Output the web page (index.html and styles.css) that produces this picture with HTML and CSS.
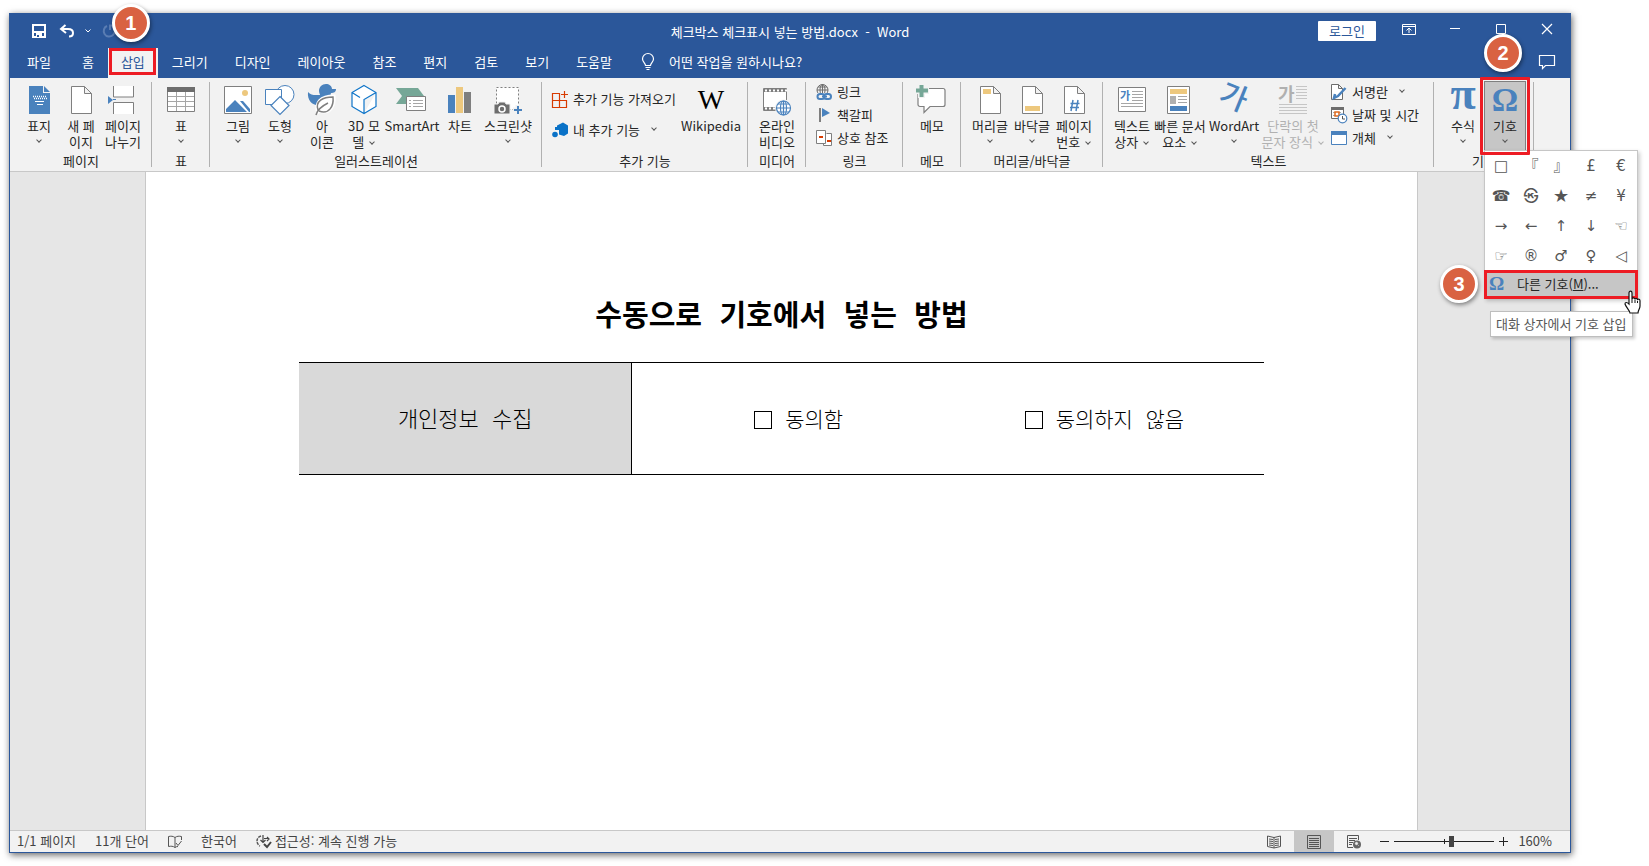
FILE: index.html
```html
<!DOCTYPE html>
<html lang="ko">
<head>
<meta charset="utf-8">
<title>체크박스 체크표시 넣는 방법.docx - Word</title>
<link rel="stylesheet" href="styles.css">
</head>
<body>
<div class="window">
  <header class="titlebar">
    <div class="quick">
      <button class="qbtn" aria-label="저장"><svg width="14" height="14" viewBox="0 0 14 14"><path d="M1 1h12v12H1z" fill="none" stroke="#fff" stroke-width="2"/><path d="M2 7h10v2H2zM4 9h6v5H4z" fill="#fff"/><path d="M5 11h2v2H5z" fill="#2b579a"/></svg></button>
      <button class="qbtn" aria-label="실행 취소"><svg width="16" height="14" viewBox="0 0 16 14"><path d="M6.500 1L2 5l5 4M2.500 5H9c3 0 5 1.500 5 4 0 2-1.500 3.500-4 3.500" fill="none" stroke="#fff" stroke-width="2"/></svg></button>
      <button class="qdrop" aria-label="실행 취소 목록"><svg width="6" height="4" viewBox="0 0 6 4"><path d="M.5.5L3 3 5.500.5" fill="none" stroke="#fff"/></svg></button>
      <button class="qbtn" aria-label="다시 실행"><svg width="14" height="14" viewBox="0 0 14 14"><path d="M5 2a5.500 5.500 0 1 0 6 1M8 6V1.500h5" fill="none" stroke="#5a7db3" stroke-width="2"/></svg></button>
    </div>
    <h1 class="doc-name">체크박스 체크표시 넣는 방법.docx&nbsp; -&nbsp; Word</h1>
    <div class="controls">
      <button class="login">로그인</button>
      <button class="wbtn" aria-label="리본 표시 옵션"><svg width="14" height="12" viewBox="0 0 14 12"><path d="M.5 1.500h13v10H.5zM.5 3.500h13M7 10V5M4.500 7.500L7 5l2.500 2.500" fill="none" stroke="#fff"/></svg></button>
      <button class="wbtn" aria-label="최소화"><svg width="12" height="12" viewBox="0 0 12 12"><path d="M1 5.500h10" stroke="#fff"/></svg></button>
      <button class="wbtn" aria-label="최대화"><svg width="12" height="12" viewBox="0 0 12 12"><path d="M1.500 1.500h9v9h-9z" fill="none" stroke="#fff"/></svg></button>
      <button class="wbtn" aria-label="닫기"><svg width="12" height="12" viewBox="0 0 12 12"><path d="M1 1l10 10M11 1L1 11" stroke="#fff" stroke-width="1.200"/></svg></button>
    </div>
  </header>

  <nav class="tabs">
    <button class="tab file">파일</button>
    <button class="tab">홈</button>
    <button class="tab active">삽입<span class="frame"></span><span class="badge">1</span></button>
    <button class="tab">그리기</button>
    <button class="tab">디자인</button>
    <button class="tab">레이아웃</button>
    <button class="tab">참조</button>
    <button class="tab">편지</button>
    <button class="tab">검토</button>
    <button class="tab">보기</button>
    <button class="tab">도움말</button>
    <button class="tab tell"><svg width="14" height="18" viewBox="0 0 14 18"><path d="M4.500 12.500C4.500 10 1.500 9 1.500 6a5.500 5.500 0 0 1 11 0c0 3-3 4-3 6.500zM4.500 14.500h5M5.500 16.500h3" fill="none" stroke="#fff" stroke-width="1.200"/></svg>어떤 작업을 원하시나요?</button>
    <button class="tab comment" aria-label="메모"><svg width="18" height="16" viewBox="0 0 18 16"><path d="M1.500 1.500h15v10H7.500L4.500 14.500v-3h-3z" fill="none" stroke="#fff" stroke-width="1.200"/></svg></button>
  </nav>

  <div class="ribbon">
    <section class="group">
      <div class="tools">
        <button class="big"><svg class="ico" viewBox="0 0 32 32"><path d="M6 2h14v7h7v21H6z" fill="#4a82bd"/><path d="M21 2l6 6h-6z" fill="#4a82bd"/><path d="M10 12.500h13M11 14.500h13" stroke="#fff" stroke-width="1.500" stroke-dasharray="1 1"/><path d="M12 17.500h9M14 20.500h6" stroke="#fff" stroke-width="1"/></svg><span>표지</span><i class="chev"></i></button>
        <button class="big"><svg class="ico" viewBox="0 0 32 32"><path d="M6.500 2.500h13l7 7v20h-20zM19.500 2.500v7h7" fill="#fff" stroke="#7f7f7f"/></svg><span>새 페<br>이지</span></button>
        <button class="big"><svg class="ico" viewBox="0 0 32 32"><path d="M6 2h20v11H6zM6 19h20v11H6z" fill="#fff"/><path d="M6.500 2v11h20V2M6.500 30V18.500h20V30" fill="none" stroke="#7f7f7f"/><path d="M1 12l5 4-5 4z" fill="#4a82bd"/><path d="M6 15.500h3" stroke="#4a82bd"/></svg><span>페이지<br>나누기</span></button>
      </div>
      <h2>페이지</h2>
    </section>
    <section class="group">
      <div class="tools">
        <button class="big"><svg class="ico" viewBox="0 0 32 32"><path d="M2.500 3.500h27v24h-27z" fill="#fff" stroke="#7f7f7f"/><path d="M2 3h28v5H2z" fill="#6d6d6d"/><path d="M3 12.500h26M3 17.500h26M3 22.500h26M11.500 8v19M20.500 8v19" stroke="#a6a6a6"/></svg><span>표</span><i class="chev"></i></button>
      </div>
      <h2>표</h2>
    </section>
    <section class="group snug">
      <div class="tools">
        <button class="big"><svg class="ico" viewBox="0 0 32 32"><path d="M2.500 2.500h27v27h-27z" fill="#fff" stroke="#7f7f7f"/><circle cx="23" cy="9" r="3" fill="#edc87e"/><path d="M4 28v-3l9-9 12 12zM18 17h3l7 8v3h-1z" fill="#4a82bd"/></svg><span>그림</span><i class="chev"></i></button>
        <button class="big"><svg class="ico" viewBox="0 0 32 32"><g fill="#fff" stroke="#4a82bd"><circle cx="21" cy="10.500" r="9"/><path d="M1.500 5.500h16v15h-16z"/></g><path d="M16 12.500l9 9-9 9-9-9z" fill="#fff" stroke="#4a82bd" stroke-width="1.200"/></svg><span>도형</span><i class="chev"></i></button>
        <button class="big"><svg class="ico" viewBox="0 0 32 32"><path d="M2 8c3 4 8 3 12 3 0-1-1-2-1-4 0-4 3-7 7-7 3 0 6 2 6 5h4c0 3-2 4-5 4l-1 4c0 5-4 8-10 8C7 22 1 17 2 8z" fill="#4a82bd"/><path d="M12 30c-4-12 3-18 16-18 1 10-4 19-15 15" fill="#fff" stroke="#fff" stroke-width="3"/><path d="M10 31c1-5 6-9 12-12M12 26c-3-9 5-13 15-13 1 9-4 18-14 14" fill="none" stroke="#7f7f7f" stroke-width="1.500"/></svg><span>아<br>이콘</span></button>
        <button class="big"><svg class="ico" viewBox="0 0 32 32"><path d="M16 1.500l12 7v14l-12 7-12-7v-14zM4 8.500l8 5M28 8.500l-12 7v14" fill="#fff" stroke="#0f75c9" stroke-width="1.200"/></svg><span>3D 모<br>델 <i class="chev"></i></span></button>
        <button class="big wide"><svg class="ico" viewBox="0 0 32 32"><path d="M0 4h22l6 8H11v8H0l6-8z" fill="#76a797"/><path d="M10.500 12.500h19v14h-19z" fill="#fff" stroke="#7f7f7f"/><path d="M13 16.500h2m2 0h10M13 19.500h2m2 0h10M13 22.500h2m2 0h10" stroke="#a6a6a6"/></svg><span>SmartArt</span></button>
        <button class="big"><svg class="ico" viewBox="0 0 32 32"><path d="M4 11h7v18H4z" fill="#4a82bd"/><path d="M12 3h7v26h-7z" fill="#edc87e"/><path d="M20 8h7v21h-7z" fill="#7f7f7f"/></svg><span>차트</span></button>
        <button class="big wide"><svg class="ico" viewBox="0 0 32 32"><path d="M4.500 3.500h22v22h-22z" fill="#fff" stroke="#7f7f7f" stroke-dasharray="2 2"/><path d="M2 20h4l1-2h6l1 2h4v10H2z" fill="#6d6d6d" stroke="#f2f2f2"/><circle cx="10" cy="25" r="3" fill="none" stroke="#fff" stroke-width="1.500"/><path d="M26 21v10M21 26h10" stroke="#f2f2f2" stroke-width="5"/><path d="M26 22v8M22 26h8" stroke="#4a82bd" stroke-width="2"/></svg><span>스크린샷</span><i class="chev"></i></button>
      </div>
      <h2>일러스트레이션</h2>
    </section>
    <section class="group">
      <div class="tools">
        <div class="rows two">
          <button class="small"><svg width="18" height="18" viewBox="0 0 18 18"><path d="M1.500 3.500h7v14h-7zM1.500 10.500h14v7h-7M13.500 1v7M10 4.500h7" fill="none" stroke="#d83b01" stroke-width="1.200"/></svg>추가 기능 가져오기</button>
          <button class="small"><svg width="18" height="18" viewBox="0 0 18 18"><path d="M6 4.500l6-3 5 3v8l-4 2.500-5-1.500V9H6z" fill="#0a72c7"/><circle cx="4" cy="13.500" r="2.800" fill="#0a72c7"/><path d="M4 6h3v3H4z" fill="#0a72c7"/></svg>내 추가 기능<i class="chev"></i></button>
        </div>
        <button class="big wiki-tool"><span class="ico glyph wiki" aria-hidden="true">W</span><span>Wikipedia</span></button>
      </div>
      <h2>추가 기능</h2>
    </section>
    <section class="group">
      <div class="tools">
        <button class="big"><svg class="ico" viewBox="0 0 32 32"><path d="M2.500 4.500h23v22h-23z" fill="#fff" stroke="#7f7f7f"/><path d="M3 6.500h23M3 24.500h15" stroke="#7f7f7f" stroke-width="3"/><path d="M4 6.500h22M4 24.500h14" stroke="#fff" stroke-width="2" stroke-dasharray="2 2"/><circle cx="22.500" cy="24" r="8.500" fill="#f2f2f2"/><g fill="#fff" stroke="#4a82bd" stroke-width="1.200"><circle cx="22.500" cy="24" r="7"/><ellipse cx="22.500" cy="24" rx="3" ry="7"/><path d="M15.500 24h14M17 20h11M17 28h11M22.500 17v14" fill="none"/></g></svg><span>온라인<br>비디오</span></button>
      </div>
      <h2>미디어</h2>
    </section>
    <section class="group">
      <div class="tools">
        <div class="rows">
          <button class="small"><svg width="18" height="18" viewBox="0 0 18 18"><g fill="none" stroke="#6d6d6d"><circle cx="7.500" cy="7" r="5.500"/><ellipse cx="7.500" cy="7" rx="2.500" ry="5.500"/><path d="M2 7h11M3 4h9M7.500 1v9"/></g><path d="M0 10h18v8H0z" fill="#f2f2f2"/><g fill="none" stroke="#4a82bd" stroke-width="2"><rect x="2.500" y="11" width="7" height="5" rx="2.500"/><rect x="9" y="11" width="7" height="5" rx="2.500"/><path d="M7 13.500h5"/></g></svg>링크</button>
          <button class="small"><svg width="18" height="18" viewBox="0 0 18 18"><path d="M5 2v14" stroke="#7f7f7f" stroke-width="2"/><path d="M7 2l8 5-8 4z" fill="#4a82bd"/></svg>책갈피</button>
          <button class="small"><svg width="18" height="18" viewBox="0 0 18 18"><path d="M1.500 1.500h9v13h-9zM11.500 4.500h5v12h-8v-2" fill="#fff" stroke="#7f7f7f"/><path d="M4 8h4M12 12h4" stroke="#d83b01" stroke-width="2"/></svg>상호 참조</button>
        </div>
      </div>
      <h2>링크</h2>
    </section>
    <section class="group">
      <div class="tools">
        <button class="big"><svg class="ico" viewBox="0 0 32 32"><path d="M5 4.500h22a2 2 0 0 1 2 2v14a2 2 0 0 1-2 2H14l-6 6v-6H4a2 2 0 0 1-2-2V6.500z" fill="#fff" stroke="#7f7f7f" stroke-width="1.200"/><path d="M5.500-1v15M-1 6.500h14" stroke="#f2f2f2" stroke-width="7"/><path d="M5.500 1v12M0 6.500h12" stroke="#76a797" stroke-width="4"/></svg><span>메모</span></button>
      </div>
      <h2>메모</h2>
    </section>
    <section class="group">
      <div class="tools">
        <button class="big"><svg class="ico" viewBox="0 0 32 32"><path d="M6.500 2.500h13l7 7v20h-20zM19.500 2.500v7h7" fill="#fff" stroke="#7f7f7f"/><path d="M9 5h8v5H9z" fill="#edc87e"/></svg><span>머리글</span><i class="chev"></i></button>
        <button class="big"><svg class="ico" viewBox="0 0 32 32"><path d="M6.500 2.500h13l7 7v20h-20zM19.500 2.500v7h7" fill="#fff" stroke="#7f7f7f"/><path d="M9 22h15v5H9z" fill="#edc87e"/></svg><span>바닥글</span><i class="chev"></i></button>
        <button class="big"><svg class="ico" viewBox="0 0 32 32"><path d="M6.500 2.500h13l7 7v20h-20zM19.500 2.500v7h7" fill="#fff" stroke="#7f7f7f"/><path d="M15 16l-2 11M20 16l-2 11M12.500 19.500h9M12 23.500h9" stroke="#4a82bd" stroke-width="1.500"/></svg><span>페이지<br>번호 <i class="chev"></i></span></button>
      </div>
      <h2>머리글/바닥글</h2>
    </section>
    <section class="group">
      <div class="tools">
        <button class="big"><svg class="ico" viewBox="0 0 32 32"><path d="M2.500 3.500h27v24h-27z" fill="#fff" stroke="#7f7f7f"/><text class="ga" x="4" y="16" font-size="11">가</text><path d="M16 7.500h11M16 10.500h11M16 13.500h11M16 16.500h11M5 19.500h22M5 22.500h22" stroke="#a6a6a6"/></svg><span>텍스트<br>상자 <i class="chev"></i></span></button>
        <button class="big wide"><svg class="ico" viewBox="0 0 32 32"><path d="M3.500 2.500h22v27h-22z" fill="#fff" stroke="#7f7f7f"/><path d="M6 5h17v5H6z" fill="#edc87e"/><path d="M6 12h6v8H6z" fill="#b0b0b0"/><path d="M14 12.500h9M14 15.500h9M14 18.500h9" stroke="#a6a6a6"/><path d="M6 22h17v5H6z" fill="#4a82bd"/></svg><span>빠른 문서<br>요소 <i class="chev"></i></span></button>
        <button class="big wide"><svg class="ico" viewBox="0 0 32 32"><text class="ga word" x="1" y="24" font-size="30" transform="rotate(22 16 16)">가</text></svg><span>WordArt</span><i class="chev"></i></button>
        <button class="big wider" disabled><svg class="ico" viewBox="0 0 32 32"><text class="ga off" x="1" y="17" font-size="18">가</text><path d="M19 2.500h11M19 5.500h11M19 8.500h11M19 11.500h11M19 14.500h11M2 20.500h28M2 23.500h28M2 26.500h28M2 29.500h28" stroke="#c6c6c6"/></svg><span>단락의 첫<br>문자 장식 <i class="chev"></i></span></button>
        <div class="rows">
          <button class="small"><svg width="18" height="18" viewBox="0 0 18 18"><path d="M1.500 1.500h7l4 4v11h-11zM8.500 1.500v4h4" fill="#fff" stroke="#6d6d6d"/><path d="M15.500 5L8 13l-4 2 1-4" fill="none" stroke="#4a82bd" stroke-width="2.500"/></svg>서명란<i class="chev"></i></button>
          <button class="small"><svg width="18" height="18" viewBox="0 0 18 18"><path d="M1.500 1.500h12v11h-12z" fill="#fff" stroke="#6d6d6d"/><path d="M1 2.500h13" stroke="#6d6d6d" stroke-width="3"/><path d="M3 6.500h9M3 9.500h9" stroke="#a6a6a6" stroke-dasharray="2 1"/><path d="M5 6h4v4H5z" fill="#fff" stroke="#e06a1c" stroke-width="1.500"/><circle cx="12.500" cy="12.500" r="4.300" fill="#fff" stroke="#4a82bd" stroke-width="1.200"/><path d="M12.500 10v3H15" fill="none" stroke="#555"/></svg>날짜 및 시간</button>
          <button class="small"><svg width="18" height="18" viewBox="0 0 18 18"><path d="M1.500 2.500h15v13h-15z" fill="#fff" stroke="#4a82bd"/><path d="M1 4h16" stroke="#4a82bd" stroke-width="4"/></svg>개체<i class="chev"></i></button>
        </div>
      </div>
      <h2>텍스트</h2>
    </section>
    <section class="group">
      <div class="tools">
        <button class="big"><span class="ico glyph pi" aria-hidden="true">π</span><span>수식</span><i class="chev"></i></button>
        <div class="drop">
          <button class="big pressed" aria-expanded="true"><span class="ico glyph omega" aria-hidden="true">Ω</span><span>기호</span><i class="chev"></i></button>
          <span class="frame"></span><span class="badge">2</span>
          <div class="menu">
            <div class="symbols">
              <button>□</button><button>『</button><button>』</button><button>£</button><button>€</button>
              <button>☎</button><button>㉿</button><button class="star">★</button><button>≠</button><button>¥</button>
              <button>→</button><button>←</button><button>↑</button><button>↓</button><button>☜</button>
              <button>☞</button><button>®</button><button>♂</button><button>♀</button><button>◁</button>
            </div>
            <button class="more"><span class="om" aria-hidden="true">Ω</span>다른 기호(<u>M</u>)...<span class="frame"></span><span class="badge">3</span></button>
            <svg class="cursor" width="18" height="24" viewBox="0 0 18 24"><path d="M5 13V3c0-2.500 3-2.500 3 0v6c0-1.500 3-1.500 3 .5 0-1.500 2.500-1.500 2.500.7 0-1.500 2.500-1.500 2.500.5V16c0 3-2 4-2 7H6c0-2-4-6-5-9 0-2 2-2 4 0z" fill="#fff" stroke="#111" stroke-width="1.200"/><path d="M8 9v4M11 10v3M13.500 11v2" stroke="#111"/></svg>
            <div class="tip" role="tooltip">대화 상자에서 기호 삽입</div>
          </div>
        </div>
      </div>
      <h2>기호</h2>
    </section>
  </div>

  <main class="workspace">
    <article class="page">
      <h2 class="heading">수동으로 기호에서 넣는 방법</h2>
      <table class="form">
        <tr>
          <th scope="row">개인정보 수집</th>
          <td><label><input type="checkbox">동의함</label></td>
          <td class="last"><label><input type="checkbox">동의하지 않음</label></td>
        </tr>
      </table>
    </article>
  </main>

  <footer class="status">
    <span>1/1 페이지</span>
    <span>11개 단어</span>
    <svg width="14" height="14" viewBox="0 0 14 14"><path d="M7 2.500C5 1 3 1 .5 1.500v10c2.500-.5 4.500-.5 6.500 1V2.500C9 1 11 1 13.500 1.500V5M7 12.500c1-.8 2-1 3-1M8 8l2 2.500L13.500 6" fill="none" stroke="#555"/></svg>
    <span>한국어</span>
    <span class="acc"><svg width="16" height="14" viewBox="0 0 16 14"><path d="M5 2C2 3 1 5 1 7s1 4 3 5" fill="none" stroke="#555" stroke-width="1.500" stroke-dasharray="3 1"/><path d="M7 1v7M4.500 6L7 8.500 9.500 6M8 4.500h4M11 3l2 2-2 2" fill="none" stroke="#444" stroke-width="1.200"/><path d="M8 10l3 3 4-5" fill="none" stroke="#444" stroke-width="2"/></svg>접근성: 계속 진행 가능</span>
    <div class="views">
      <button aria-label="읽기 모드"><svg width="14" height="14" viewBox="0 0 14 14"><path d="M7 2.500L.5 1v10.500L7 13l6.500-1.500V1zM7 2v11" fill="none" stroke="#555"/><path d="M2 4l4 .5M2 6l4 .5M2 8l4 .5M2 10l4 .5M8 4.500l4-.5M8 6.500l4-.5M8 8.500l4-.5M8 10.500l4-.5" stroke="#555"/></svg></button>
      <button class="on" aria-label="인쇄 모양"><svg width="14" height="14" viewBox="0 0 14 14"><path d="M.5.5h13v13H.5zM2 3.500h10M2 5.500h10M2 7.500h10M2 9.500h10M2 11.500h10" fill="none" stroke="#555"/></svg></button>
      <button aria-label="웹 모양"><svg width="14" height="14" viewBox="0 0 14 14"><path d="M6 12.500H.5v-12h11V5M2 3.500h8M2 5.500h6M2 7.500h4M2 9.500h3" fill="none" stroke="#555"/><circle cx="10" cy="9.500" r="4" fill="#666"/><path d="M8 8l2-1 1 2-2 1zM11 11l1-1" fill="#eee" stroke="#eee" stroke-width=".5"/></svg></button>
    </div>
    <div class="zoom">
      <button aria-label="축소"><svg width="9" height="9" viewBox="0 0 9 9"><path d="M0 4.500h9" stroke="#222"/></svg></button>
      <input type="range" min="10" max="310" value="184" aria-label="확대/축소">
      <button aria-label="확대"><svg width="9" height="9" viewBox="0 0 9 9"><path d="M0 4.500h9M4.500 0v9" stroke="#222"/></svg></button>
    </div>
    <span class="pct">160%</span>
  </footer>
</div>
</body>
</html>
```
FILE: styles.css
```css
* { box-sizing: border-box; }
body {
  margin: 0;
  background: #fff;
  color: #262626;
  font: 13px/16px "Noto Sans CJK KR", sans-serif;
}
button {
  margin: 0;
  padding: 0;
  border: 0;
  background: none;
  color: inherit;
  font: inherit;
}
svg { display: block; flex: none; overflow: visible; }
h1, h2 { margin: 0; font-size: 13px; font-weight: 400; }

.window {
  display: flex;
  flex-direction: column;
  height: calc(100vh - 26px);
  margin: 13px 78px 13px 9px;
  border: 1px solid #2b579a;
  background: #e6e6e6;
  box-shadow: 1px 2px 7px rgba(0, 0, 0, .6);
}

/* title bar */
.titlebar {
  display: grid;
  grid-template-columns: 1fr auto 1fr;
  height: 34px;
  background: #2b579a;
  color: #fff;
}
.quick { display: flex; align-items: center; padding-left: 15px; }
.qbtn { display: flex; justify-content: center; width: 28px; }
.qdrop { width: 14px; display: flex; justify-content: center; }
.doc-name { align-self: center; padding-top: 2px; }
.controls { display: flex; justify-content: flex-end; align-items: center; }
.login {
  width: 58px;
  height: 20px;
  margin-right: 10px;
  border-radius: 1px;
  background: #fff;
  color: #2b579a;
}
.wbtn { display: flex; justify-content: center; width: 46px; padding-bottom: 4px; }

/* tabs */
.tabs { display: flex; gap: 1px; height: 30px; background: #2b579a; color: #fff; }
.tab { position: relative; padding: 0 13px 2px; }
.file { padding: 0 17px 2px; }
.active { background: #f2f2f2; color: #2b579a; }
.tell { display: flex; align-items: center; gap: 14px; margin-left: 2px; }
.comment { margin-left: auto; padding-right: 14px; }

.frame {
  position: absolute;
  inset: 0 2px 3px 1px;
  border: 3px solid #ed1c24;
  pointer-events: none;
}
.badge {
  position: absolute;
  z-index: 5;
  top: -44px;
  left: 4px;
  width: 38px;
  height: 38px;
  border: 3px solid #fff;
  border-radius: 50%;
  background: #d96242;
  box-shadow: 1px 2px 4px rgba(0, 0, 0, .45);
  color: #fff;
  font: bold 20px/32px "Liberation Sans", sans-serif;
  text-align: center;
}

/* ribbon */
.ribbon {
  display: flex;
  border-bottom: 1px solid #c8c8c8;
  background: #f2f2f2;
}
.group {
  display: flex;
  flex-direction: column;
  padding: 3px 8px 2px;
  background: linear-gradient(#b1b1b1, #b1b1b1) right 4px / 1px 85px no-repeat;
}
.snug { padding: 3px 7px 2px; }
.group > h2 { margin-top: 2px; text-align: center; line-height: 16px; white-space: nowrap; }
.tools { display: flex; height: 70px; }
.big {
  display: flex;
  flex-direction: column;
  align-items: center;
  width: 42px;
  height: 70px;
  padding-top: 3px;
  white-space: nowrap;
}
.wide { width: 54px; }
.wider { width: 64px; }
.wiki-tool { width: 58px; }
.big:disabled { color: #b1b1b1; }
.ico { width: 32px; height: 32px; margin-bottom: 2px; }
.chev {
  display: inline-block;
  flex: none;
  width: 4px;
  height: 4px;
  border: solid #555;
  border-width: 0 1px 1px 0;
  transform: rotate(45deg);
}
.big .chev { margin: 4px 2px 3px; }
.big:disabled .chev { border-color: #b1b1b1; }
.rows { display: flex; flex-direction: column; width: 81px; }
.two { width: 132px; padding-top: 3px; }
.small {
  display: flex;
  align-items: center;
  gap: 4px;
  height: 23px;
  padding: 0 0 2px 1px;
  text-align: left;
  white-space: nowrap;
}
.two .small { height: 31px; }
.small .chev { margin: 0 0 3px 8px; }
.wider + .rows { width: 101px; padding-left: 4px; }

.glyph { display: block; color: #4a82bd; font-family: "Liberation Serif", serif; text-align: center; line-height: 32px; }
.wiki { color: #000; font-size: 28px; }
.pi { font-size: 46px; font-weight: 700; line-height: 20px; }
.omega { font-size: 33px; font-weight: 700; }
.ga { fill: #4a82bd; font-family: "Noto Sans CJK KR", sans-serif; font-weight: 700; }
.word { font-weight: 500; }
.off { fill: #b0b0b0; }

/* symbol menu */
.drop { position: relative; z-index: 4; }
.pressed { background: #c6c6c6; box-shadow: inset 0 0 0 1px #7f7f7f; }
.drop > .frame { inset: -4px; z-index: 2; border-radius: 1px; }
.drop > .badge { top: -47px; left: 0; }
.menu {
  position: absolute;
  top: 69px;
  left: 0;
  width: 154px;
  border: 1px solid #c6c6c6;
  background: #fff;
  box-shadow: 2px 2px 4px rgba(0, 0, 0, .2);
}
.symbols { display: grid; grid-template-columns: repeat(5, 30px); padding: 0 1px; }
.symbols button {
  height: 30px;
  color: #555;
  font: 15px/30px "DejaVu Sans", "Noto Sans CJK KR", sans-serif;
}
.symbols .star { font-size: 18px; }
.more {
  position: relative;
  display: flex;
  align-items: center;
  width: 100%;
  height: 27px;
  padding: 0 8px 2px 4px;
  background: #c6c6c6;
}
.om {
  width: 28px;
  color: #4a82bd;
  font: bold 19px/24px "Liberation Serif", serif;
  text-align: left;
}
.more .frame { inset: -1px; }
.more .badge { top: -6px; left: -45px; }
.cursor { position: absolute; top: 139px; left: 139px; z-index: 6; }
.tip {
  position: absolute;
  top: 160px;
  left: 5px;
  padding: 4px 5px;
  border: 1px solid #bebebe;
  background: #fff;
  box-shadow: 2px 2px 3px rgba(0, 0, 0, .2);
  color: #575757;
  white-space: nowrap;
}

/* document */
.workspace { flex: 1; display: flex; min-height: 0; padding: 0 152px 0 135px; }
.page {
  flex: 1;
  padding: 123px 153px 0;
  border: solid #c8c8c8;
  border-width: 0 1px;
  background: #fff;
  color: #000;
}
.heading {
  margin-bottom: 19px;
  font: 700 29px/48px "Liberation Mono", "Noto Sans CJK KR", monospace;
  text-align: center;
}
.form {
  width: 100%;
  height: 113px;
  border-collapse: collapse;
  border: solid #000;
  border-width: 1px 0;
  table-layout: fixed;
  font: 300 21px/32px "Liberation Mono", "Noto Sans CJK KR Light", "Noto Sans CJK KR", monospace;
}
.form th {
  width: 34.500%;
  padding: 6px 0 0;
  border-right: 1px solid #000;
  background: #d9d9d9;
  font-size: 22px;
  font-weight: 300;
}
.form td { width: 34.500%; padding: 6px 0 0; }
.form .last { width: 31%; padding-right: 20px; }
.form label { display: flex; justify-content: center; align-items: center; gap: 13px; }
.form input {
  appearance: none;
  width: 18px;
  height: 18px;
  margin: 0 0 4px;
  border: 1px solid #000;
}

/* status bar */
.status {
  display: flex;
  align-items: center;
  height: 22px;
  padding: 0 18px 0 7px;
  gap: 19px;
  border-top: 1px solid #c8c8c8;
  background: #f2f2f2;
  color: #444;
  line-height: 20px;
  white-space: nowrap;
}
.status > span { padding-bottom: 2px; }
.acc { display: flex; align-items: center; gap: 3px; }
.views { display: flex; align-self: stretch; margin-left: auto; }
.views button { display: flex; justify-content: center; align-items: center; width: 40px; }
.views .on { background: #c6c6c6; }
.zoom { display: flex; align-items: center; gap: 5px; margin-left: -13px; }
.zoom input {
  appearance: none;
  width: 100px;
  height: 12px;
  margin: 0;
  background:
    linear-gradient(#222, #222) 50% 50% / 1px 5px no-repeat,
    linear-gradient(#222, #222) 0 50% / 100% 1px no-repeat;
}
.zoom input::-webkit-slider-thumb { appearance: none; width: 5px; height: 11px; background: #444; }
.pct { margin-left: -9px; }
```
